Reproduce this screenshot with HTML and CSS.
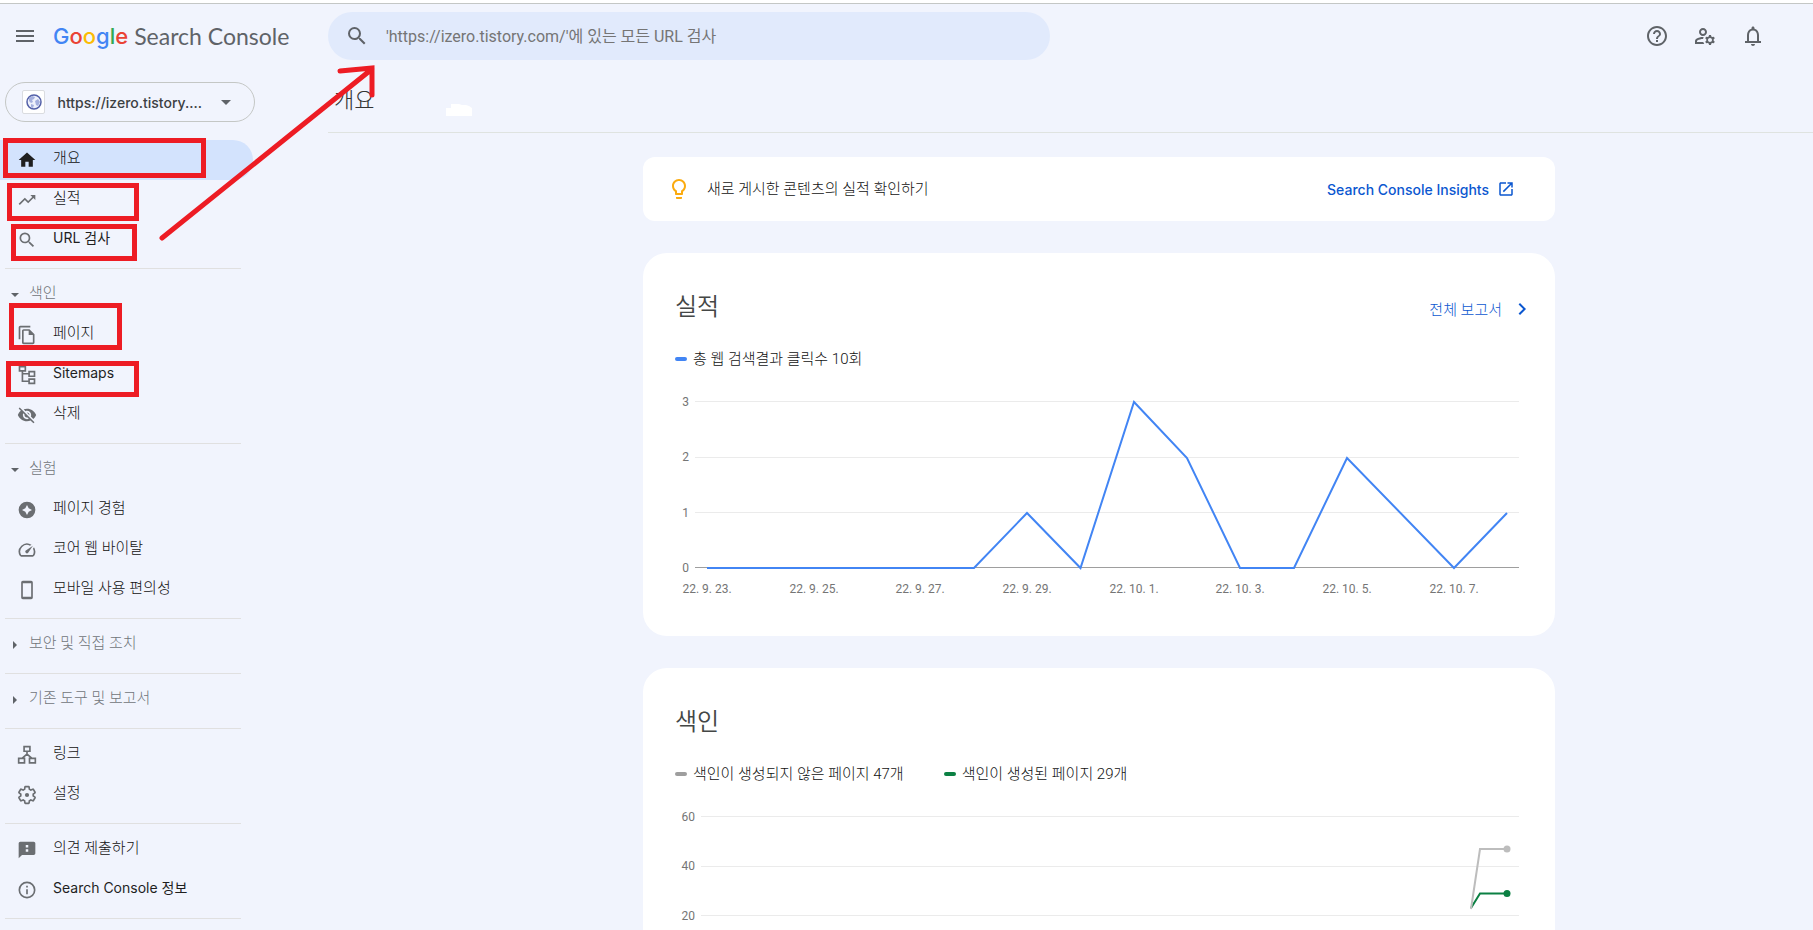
FILE: index.html
```html
<!DOCTYPE html>
<html lang="ko">
<head>
  <meta charset="UTF-8">
  <title>개요</title>
  <link rel="stylesheet" href="styles.css">
</head>
<body>

  <header class="topbar">
    <div class="brand">
      <button class="icon-button" aria-label="메뉴">
        <svg class="icon" viewBox="0 0 24 24"><path d="M3 18h18v-2H3v2zm0-5h18v-2H3v2zm0-7v2h18V6H3z"/></svg>
      </button>
      <a class="logo" href="#"><span class="google"><span class="g-blue">G</span><span class="g-red">o</span><span class="g-yellow">o</span><span class="g-blue">g</span><span class="g-green">l</span><span class="g-red">e</span></span> <span class="product">Search Console</span></a>
    </div>
    <form class="search">
      <svg class="icon" viewBox="0 0 24 24"><path d="M15.5 14h-.79l-.28-.27A6.471 6.471 0 0 0 16 9.5 6.5 6.5 0 1 0 9.5 16c1.61 0 3.09-.59 4.23-1.57l.27.28v.79l5 4.99L20.49 19l-4.99-5zm-6 0C7.01 14 5 11.99 5 9.5S7.01 5 9.5 5 14 7.01 14 9.5 11.99 14 9.5 14z"/></svg>
      <input type="text" aria-label="URL 검사" placeholder="'https://izero.tistory.com/'에 있는 모든 URL 검사">
    </form>
    <div class="actions">
      <button class="icon-button" aria-label="도움말">
        <svg class="icon" viewBox="0 0 24 24"><path d="M11 18h2v-2h-2v2zm1-16C6.48 2 2 6.48 2 12s4.48 10 10 10 10-4.48 10-10S17.52 2 12 2zm0 18c-4.41 0-8-3.59-8-8s3.59-8 8-8 8 3.59 8 8-3.59 8-8 8zm0-14c-2.21 0-4 1.79-4 4h2c0-1.1.9-2 2-2s2 .9 2 2c0 2-3 1.75-3 5h2c0-2.25 3-2.5 3-5 0-2.21-1.79-4-4-4z"/></svg>
      </button>
      <button class="icon-button" aria-label="사용자 설정">
        <svg class="icon" viewBox="0 0 24 24"><path d="M4 18v-.65c0-.34.16-.66.41-.81C6.1 15.53 8.03 15 10 15c.03 0 .05 0 .08.01.1-.7.3-1.37.59-1.98-.22-.02-.44-.03-.67-.03-2.42 0-4.68.67-6.61 1.82-.88.52-1.39 1.5-1.39 2.53V20h9.26c-.42-.6-.75-1.28-.97-2H4z"/><path d="M10 12c2.21 0 4-1.79 4-4s-1.79-4-4-4-4 1.79-4 4 1.79 4 4 4zm0-6c1.1 0 2 .9 2 2s-.9 2-2 2-2-.9-2-2 .9-2 2-2z"/><path d="M20.75 16c0-.22-.03-.42-.06-.63l1.14-1.01-1-1.73-1.45.49c-.32-.27-.68-.48-1.08-.63L18 11h-2l-.3 1.49c-.4.15-.76.36-1.08.63l-1.45-.49-1 1.73 1.14 1.01c-.03.21-.06.41-.06.63s.03.42.06.63l-1.14 1.01 1 1.73 1.45-.49c.32.27.68.48 1.08.63L16 21h2l.3-1.49c.4-.15.76-.36 1.08-.63l1.45.49 1-1.73-1.14-1.01c.03-.21.06-.41.06-.63zM17 18c-1.1 0-2-.9-2-2s.9-2 2-2 2 .9 2 2-.9 2-2 2z"/></svg>
      </button>
      <button class="icon-button" aria-label="알림">
        <svg class="icon" viewBox="0 0 24 24"><path d="M18 17v-6c0-3.07-1.63-5.64-4.5-6.32V4c0-.83-.67-1.5-1.5-1.5s-1.5.67-1.5 1.5v.68C7.64 5.36 6 7.92 6 11v6H4v2h16v-2h-2zm-2 0H8v-6c0-2.48 1.51-4.5 4-4.5s4 2.02 4 4.5v6zm-4 5c1.1 0 2-.9 2-2h-4c0 1.1.9 2 2 2z"/></svg>
      </button>
    </div>
  </header>

  <div class="layout">
    <aside class="sidebar">
      <button class="property">
        <span class="favicon">
          <svg viewBox="0 0 16 16"><circle cx="8" cy="8" r="7" fill="#eef1fb" stroke="#5360a8" stroke-width="1.5"/><path d="M3 4l3-2 3 1-1 2-2 1 1 2-2 1-2-2zM9 7l3-2 2 3-2 4-2-1zM5 10l3 1-1 3-2-1z" fill="#a5b0de"/></svg>
        </span>
        <span class="property-name">https://izero.tistory....</span>
        <svg class="icon" viewBox="0 0 24 24"><path d="M7 10l5 5 5-5z"/></svg>
      </button>

      <nav>
        <div class="nav-group">
          <a class="nav-item active" href="#"><svg viewBox="0 0 24 24"><path d="M10 20v-6h4v6h5v-8h3L12 3 2 12h3v8z"/></svg>개요</a>
          <a class="nav-item" href="#"><svg viewBox="0 0 24 24"><path d="M16 6l2.29 2.29-4.88 4.88-4-4L2 16.59 3.41 18l6-6 4 4 6.3-6.29L22 12V6z"/></svg>실적</a>
          <a class="nav-item latin" href="#"><svg viewBox="0 0 24 24"><path d="M15.5 14h-.79l-.28-.27A6.471 6.471 0 0 0 16 9.5 6.5 6.5 0 1 0 9.5 16c1.61 0 3.09-.59 4.23-1.57l.27.28v.79l5 4.99L20.49 19l-4.99-5zm-6 0C7.01 14 5 11.99 5 9.5S7.01 5 9.5 5 14 7.01 14 9.5 11.99 14 9.5 14z"/></svg>URL 검사</a>
        </div>

        <div class="nav-group">
          <button class="nav-heading"><svg viewBox="0 0 20 20"><path d="M6 8l4 4 4-4z"/></svg>색인</button>
          <a class="nav-item" href="#"><svg viewBox="0 0 24 24"><path d="M16 1H4c-1.1 0-2 .9-2 2v14h2V3h12V1zm-1 4H8c-1.1 0-1.99.9-1.99 2L6 21c0 1.1.89 2 1.99 2H19c1.1 0 2-.9 2-2V11l-6-6zM8 21V7h6v5h5v9H8z"/></svg>페이지</a>
          <a class="nav-item latin" href="#"><svg class="line" viewBox="0 0 24 24"><path d="M3 2h7v5H3zM14.5 8H21v5.5h-6.5zM14.5 17H21v5h-6.5zM6.5 7v12.5h8M6.5 10.5h8"/></svg>Sitemaps</a>
          <a class="nav-item" href="#"><svg viewBox="0 0 24 24"><path d="M12 7c2.76 0 5 2.24 5 5 0 .65-.13 1.26-.36 1.83l2.92 2.92c1.51-1.26 2.7-2.89 3.43-4.75-1.73-4.39-6-7.5-11-7.5-1.4 0-2.74.25-3.98.7l2.16 2.16C10.74 7.13 11.35 7 12 7zM2 4.27l2.28 2.28.46.46C3.08 8.3 1.78 10.02 1 12c1.73 4.39 6 7.5 11 7.5 1.55 0 3.03-.3 4.38-.84l.42.42L19.73 22 21 20.73 3.27 3 2 4.27zM7.53 9.8l1.55 1.55c-.05.21-.08.43-.08.65 0 1.66 1.34 3 3 3 .22 0 .44-.03.65-.08l1.55 1.55c-.67.33-1.41.53-2.2.53-2.76 0-5-2.24-5-5 0-.79.2-1.53.53-2.2zm4.31-.78l3.15 3.15.02-.16c0-1.66-1.34-3-3-3l-.17.01z"/></svg>삭제</a>
        </div>

        <div class="nav-group">
          <button class="nav-heading"><svg viewBox="0 0 20 20"><path d="M6 8l4 4 4-4z"/></svg>실험</button>
          <a class="nav-item" href="#"><svg viewBox="0 0 24 24"><path fill-rule="evenodd" d="M12 2a10 10 0 1 0 0 20 10 10 0 0 0 0-20zm0 4l2 4 4 2-4 2-2 4-2-4-4-2 4-2z"/></svg>페이지 경험</a>
          <a class="nav-item" href="#"><svg viewBox="0 0 24 24"><path d="M20.38 8.57l-1.23 1.85a8 8 0 0 1-.22 7.58H5.07A8 8 0 0 1 15.58 6.85l1.85-1.23A10 10 0 0 0 3.35 19a2 2 0 0 0 1.72 1h13.85a2 2 0 0 0 1.74-1 10 10 0 0 0-.27-10.44zm-9.79 6.84a2 2 0 0 0 2.83 0l5.66-8.49-8.49 5.66a2 2 0 0 0 0 2.83z"/></svg>코어 웹 바이탈</a>
          <a class="nav-item" href="#"><svg viewBox="0 0 24 24"><path d="M17 1.01L7 1c-1.1 0-1.99.9-1.99 2v18c0 1.1.89 2 1.99 2h10c1.1 0 2-.9 2-2V3c0-1.1-.9-1.99-2-1.99zM17 20H7V4h10v16z"/></svg>모바일 사용 편의성</a>
        </div>

        <div class="nav-group">
          <button class="nav-heading"><svg viewBox="0 0 20 20"><path d="M8 6l4 4-4 4z"/></svg>보안 및 직접 조치</button>
        </div>

        <div class="nav-group">
          <button class="nav-heading"><svg viewBox="0 0 20 20"><path d="M8 6l4 4-4 4z"/></svg>기존 도구 및 보고서</button>
        </div>

        <div class="nav-group">
          <a class="nav-item" href="#"><svg class="line" viewBox="0 0 24 24"><path d="M8.5 2h7v5.5h-7zM2 16h7v5.5H2zM15 16h7v5.5h-7zM12 7.5V11M6 16l6-5 6 5"/></svg>링크</a>
          <a class="nav-item" href="#"><svg viewBox="0 0 24 24"><path class="gear" d="M19.43 12.98c.04-.32.07-.64.07-.98 0-.34-.03-.66-.07-.98l2.11-1.65c.19-.15.24-.42.12-.64l-2-3.46c-.09-.16-.26-.25-.44-.25-.06 0-.12.01-.17.03l-2.49 1c-.52-.4-1.08-.73-1.69-.98l-.38-2.65C14.46 2.18 14.25 2 14 2h-4c-.25 0-.46.18-.49.42l-.38 2.65c-.61.25-1.17.59-1.69.98l-2.49-1c-.06-.02-.12-.03-.18-.03-.17 0-.34.09-.43.25l-2 3.46c-.13.22-.07.49.12.64l2.11 1.65c-.04.32-.07.65-.07.98 0 .33.03.66.07.98l-2.11 1.65c-.19.15-.24.42-.12.64l2 3.46c.09.16.26.25.44.25.06 0 .12-.01.17-.03l2.49-1c.52.4 1.08.73 1.69.98l.38 2.65c.03.24.24.42.49.42h4c.25 0 .46-.18.49-.42l.38-2.65c.61-.25 1.17-.59 1.69-.98l2.49 1c.06.02.12.03.18.03.17 0 .34-.09.43-.25l2-3.46c.12-.22.07-.49-.12-.64l-2.11-1.65z"/><circle cx="12" cy="12" r="2.5"/></svg>설정</a>
        </div>

        <div class="nav-group">
          <a class="nav-item" href="#"><svg viewBox="0 0 24 24"><path fill-rule="evenodd" d="M20 2H4c-1.1 0-1.99.9-1.99 2L2 22l4-4h14c1.1 0 2-.9 2-2V4c0-1.1-.9-2-2-2zm-6.5 12h-3v-3h3v3zm0-5h-3V6h3v3z"/></svg>의견 제출하기</a>
          <a class="nav-item latin" href="#"><svg viewBox="0 0 24 24"><circle class="ring" cx="12" cy="12" r="9.2"/><path d="M11 7h2v2h-2zM11 11h2v6h-2z"/></svg>Search Console 정보</a>
        </div>

        <div class="nav-group"></div>
      </nav>
    </aside>

    <main class="main">
      <div class="page-head">
        <h1>개요</h1>
        <svg class="smudge" viewBox="0 0 26 12"><path d="M0 12V4h5V0h8l3 1h4l3 1 3 2v8z"/></svg>
      </div>

      <div class="cards">
        <section class="insights">
          <svg class="icon bulb" viewBox="0 0 24 24"><path d="M9 21c0 .55.45 1 1 1h4c.55 0 1-.45 1-1v-1H9v1zm3-19C8.14 2 5 5.14 5 9c0 2.38 1.19 4.47 3 5.74V17c0 .55.45 1 1 1h6c.55 0 1-.45 1-1v-2.26c1.81-1.27 3-3.36 3-5.74 0-3.86-3.14-7-7-7zm2.85 11.1l-.85.6V16h-4v-2.3l-.85-.6C7.8 12.16 7 10.63 7 9c0-2.76 2.24-5 5-5s5 2.24 5 5c0 1.63-.8 3.16-2.15 4.1z"/></svg>
          <span class="insights-text">새로 게시한 콘텐츠의 실적 확인하기</span>
          <a class="insights-link" href="#">Search Console Insights
            <svg viewBox="0 0 24 24"><path d="M19 19H5V5h7V3H5c-1.11 0-2 .9-2 2v14c0 1.1.89 2 2 2h14c1.1 0 2-.9 2-2v-7h-2v7zM14 3v2h3.59l-9.83 9.83 1.41 1.41L19 6.41V10h2V3h-7z"/></svg>
          </a>
        </section>

        <section class="card">
          <div class="card-head">
            <h2>실적</h2>
            <a class="report-link" href="#">전체 보고서
              <svg class="icon" viewBox="0 0 24 24"><path d="M10 6L8.59 7.41 13.17 12l-4.58 4.59L10 18l6-6z"/></svg>
            </a>
          </div>
          <div class="legend">
            <span class="legend-item clicks">총 웹 검색결과 클릭수 10회</span>
          </div>
          <svg class="chart" viewBox="0 0 848 219">
            <path class="grid" d="M20 16.5h824M20 72.5h824M20 127.5h824"/>
            <path class="axis" d="M20 182.5h824"/>
            <g class="y-labels">
              <text x="14" y="21">3</text>
              <text x="14" y="76">2</text>
              <text x="14" y="132">1</text>
              <text x="14" y="187">0</text>
            </g>
            <g class="x-labels">
              <text x="32" y="208">22. 9. 23.</text>
              <text x="139" y="208">22. 9. 25.</text>
              <text x="245" y="208">22. 9. 27.</text>
              <text x="352" y="208">22. 9. 29.</text>
              <text x="459" y="208">22. 10. 1.</text>
              <text x="565" y="208">22. 10. 3.</text>
              <text x="672" y="208">22. 10. 5.</text>
              <text x="779" y="208">22. 10. 7.</text>
            </g>
            <polyline class="series blue" points="32,183 299,183 352,128 405.5,183 459,17 512,73 565,183 619,183 672,73 779,183 832,128"/>
          </svg>
        </section>

        <section class="card">
          <div class="card-head">
            <h2>색인</h2>
          </div>
          <div class="legend">
            <span class="legend-item not-indexed">색인이 생성되지 않은 페이지 47개</span>
            <span class="legend-item indexed">색인이 생성된 페이지 29개</span>
          </div>
          <svg class="chart" viewBox="0 0 848 219">
            <path class="grid" d="M26 16.5h818M26 66.5h818M26 115.5h818"/>
            <g class="y-labels">
              <text x="20" y="21">60</text>
              <text x="20" y="70">40</text>
              <text x="20" y="120">20</text>
            </g>
            <polyline class="series green" points="796,108 805,93.5 832,93.5"/>
            <circle class="dot-green" cx="832" cy="93.5" r="3.5"/>
            <polyline class="series grey" points="796,109 805,49 832,49"/>
            <circle class="dot-grey" cx="832" cy="49" r="3.5"/>
          </svg>
        </section>
      </div>
    </main>
  </div>

  <!-- red markup drawn over the menu -->
  <svg class="marks" width="400" height="420" viewBox="0 0 400 420">
    <rect x="5.5" y="140.5" width="198" height="35"/>
    <rect x="9.5" y="185.5" width="127" height="33"/>
    <rect x="13.5" y="226.5" width="121" height="32"/>
    <rect x="11.5" y="305.5" width="108" height="42"/>
    <rect x="8.5" y="363.5" width="128" height="31"/>
    <path d="M162 238L372 69M340 71L372 68V95"/>
  </svg>

</body>
</html>
```
FILE: styles.css
```css
* {
  box-sizing: border-box;
}

body {
  display: flex;
  flex-direction: column;
  margin: 0;
  height: 100vh;
  border-top: 3px solid #fff;
  background: #f1f4fd;
  color: #1f1f1f;
  font-family: Roboto, "Noto Sans CJK KR", sans-serif;
  font-size: 15px;
}

a {
  color: inherit;
  text-decoration: none;
}

button {
  padding: 0;
  border: none;
  background: none;
  color: inherit;
  font: inherit;
  cursor: pointer;
}

svg {
  flex: none;
  fill: currentColor;
}

.icon {
  display: block;
  width: 24px;
  height: 24px;
}

/* top bar */
.topbar {
  display: grid;
  flex: none;
  grid-template-columns: 328px 1fr auto;
  align-items: center;
  height: 65px;
  border-top: 1px solid #c4c7c5;
  color: #5f6368;
}

.brand {
  display: flex;
  align-items: center;
  gap: 16px;
  padding-left: 13px;
}

.logo {
  display: flex;
  align-items: center;
  gap: 6px;
  font-family: Lato, sans-serif;
  font-size: 23px;
  line-height: 32px;
  white-space: nowrap;
}

.google {
  font-family: Inter, sans-serif;
  font-size: 22px;
  font-weight: 500;
}

.g-blue { color: #4285f4; }
.g-red { color: #ea4335; }
.g-yellow { color: #fbbc05; }
.g-green { color: #34a853; }

.search {
  display: flex;
  align-items: center;
  gap: 17px;
  max-width: 722px;
  height: 48px;
  padding: 0 17px;
  border-radius: 24px;
  background: #e1eafc;
}

.search input {
  flex: 1;
  padding: 0;
  border: none;
  outline: none;
  background: none;
  font-family: inherit;
  font-size: 16px;
}

.search input::placeholder {
  color: #757575;
}

.actions {
  display: flex;
  gap: 24px;
  padding-right: 48px;
}

.layout {
  display: grid;
  flex: 1;
  grid-template-columns: 328px 1fr;
  min-height: 0;
  overflow: hidden;
}

/* sidebar */
.sidebar {
  padding: 14px 73px 0 0;
}

.property {
  display: flex;
  align-items: center;
  gap: 12px;
  width: 250px;
  height: 40px;
  margin: 0 0 18px 5px;
  padding: 0 16px;
  border: 1px solid #c4c7c5;
  border-radius: 20px;
  color: #5f6368;
}

.favicon {
  display: flex;
  align-items: center;
  justify-content: center;
  width: 24px;
  height: 24px;
  border: 1px solid #dadce0;
  border-radius: 2px;
  background: #fff;
}

.favicon svg {
  width: 16px;
  height: 16px;
}

.property-name {
  flex: 1;
  color: #3c4043;
  font-family: Inter, sans-serif;
  font-size: 14px;
  font-weight: 500;
  text-align: left;
}

.nav-group {
  padding: 6px 0 8px;
}

.nav-group:first-child {
  padding-top: 0;
}

.nav-group + .nav-group::before {
  content: "";
  display: block;
  width: 236px;
  height: 1px;
  margin: -6px 0 6px 5px;
  background: #e0e0e0;
}

/* labels sit a little above the icon centre */
.nav-item,
.nav-heading {
  display: flex;
  align-items: center;
  height: 40px;
  padding-bottom: 4px;
  font-weight: 300;
  line-height: 20px;
}

.nav-item svg,
.nav-heading svg {
  width: 20px;
  height: 20px;
  margin-top: 4px;
}

.nav-item {
  gap: 16px;
  width: 253px;
  padding-left: 17px;
  border-radius: 0 20px 20px 0;
  color: #111;
}

.nav-item svg {
  color: #6b6e72;
}

.nav-item.active {
  background: #d3e3fd;
}

.nav-item.active svg {
  color: #1f1f1f;
}

.nav-item.latin {
  color: #1f1f1f;
  font-family: Inter, "Noto Sans CJK KR", sans-serif;
  font-size: 14px;
  font-weight: 400;
}

.line,
.gear,
.ring {
  fill: none;
  stroke: currentColor;
  stroke-width: 2;
}

.nav-heading {
  gap: 4px;
  padding-left: 5px;
  color: #70757a;
}

.nav-heading svg {
  color: #5f6368;
}

/* main column */
.page-head {
  display: flex;
  align-items: center;
  gap: 72px;
  height: 65px;
  padding: 2px 0 0 6px;
  border-bottom: 1px solid #dfe3e0;
}

h1 {
  margin: 0;
  color: #333;
  font-size: 22px;
  font-weight: 300;
  line-height: 32px;
}

.smudge {
  width: 26px;
  height: 12px;
  margin-top: 18px;
  color: #fff;
}

.cards {
  display: flex;
  flex-direction: column;
  gap: 32px;
  max-width: 969px;
  margin: 0 auto;
  padding: 24px 0 0 57px;
}

.insights {
  display: flex;
  align-items: center;
  gap: 16px;
  height: 64px;
  padding: 0 40px 0 24px;
  border-radius: 12px;
  background: #fff;
}

.bulb {
  color: #fbab10;
}

.insights-text {
  flex: 1;
  padding-bottom: 4px;
  color: #111;
  font-weight: 300;
}

.insights-link,
.report-link {
  display: flex;
  align-items: center;
  gap: 8px;
  color: #0b57d0;
}

.insights-link {
  font-family: Inter, sans-serif;
  font-size: 14px;
  font-weight: 500;
}

.insights-link svg {
  width: 18px;
  height: 18px;
}

.card {
  padding: 32px;
  border-radius: 24px;
  background: #fff;
}

.card-head {
  display: flex;
  align-items: center;
  justify-content: space-between;
  height: 44px;
  margin-right: -11px;
}

.report-link {
  padding-top: 3px;
  font-weight: 300;
}

h2 {
  margin: 0;
  color: #444746;
  font-size: 24px;
  font-weight: 350;
  line-height: 32px;
}

.legend {
  display: flex;
  gap: 40px;
  margin: 18px 0 14px;
  color: #111;
  font-weight: 300;
  line-height: 24px;
}

.legend-item {
  display: flex;
  align-items: center;
  gap: 6px;
}

.legend-item::before {
  content: "";
  width: 12px;
  height: 4px;
  border-radius: 2px;
  background: #4285f4;
}

.legend-item.not-indexed::before { background: #9e9e9e; }
.legend-item.indexed::before { background: #0b8043; }

.chart {
  display: block;
  width: 100%;
  height: auto;
  font-size: 12px;
}

.chart text {
  fill: #757575;
}

.y-labels {
  text-anchor: end;
}

.x-labels {
  text-anchor: middle;
}

.grid {
  stroke: #ebebeb;
}

.axis {
  stroke: #9e9e9e;
}

.series {
  fill: none;
  stroke-width: 2;
}

.blue { stroke: #4285f4; }
.grey { stroke: #bdbdbd; }
.green { stroke: #0b8043; }
.dot-grey { fill: #bdbdbd; }
.dot-green { fill: #0b8043; }

/* red markup */
.marks {
  position: absolute;
  top: 0;
  left: 0;
  fill: none;
  stroke: #ed1c24;
  stroke-width: 5;
  stroke-linecap: round;
  pointer-events: none;
}
```
